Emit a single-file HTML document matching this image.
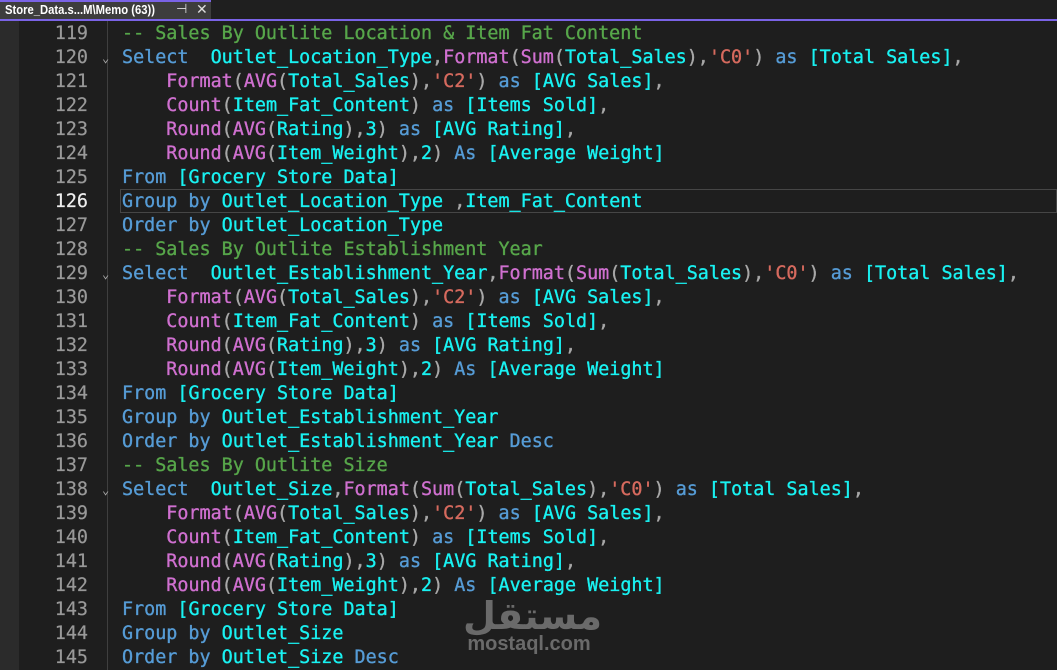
<!DOCTYPE html>
<html><head><meta charset="utf-8"><style>
*{margin:0;padding:0;box-sizing:border-box}
body{width:1057px;height:670px;background:#1e1e1e;overflow:hidden;position:relative;font-family:"DejaVu Sans Mono","Liberation Mono",monospace}
.tabbar{position:absolute;left:0;top:0;width:1057px;height:19px;background:#1f1f1f}
.tab{position:absolute;left:0;top:0;width:211px;height:19px;background:#3d3d3d;border-top:2px solid #7a63e6;white-space:nowrap}
.tab .t{position:absolute;left:5px;top:0;color:#fff;font:bold 12.5px "Liberation Sans",sans-serif;line-height:16px;transform:scaleX(0.9);transform-origin:0 0}
.tab .ic{position:absolute;left:176px;top:0;color:#ddd;font:13px "DejaVu Sans",sans-serif;line-height:16px}
.tab .x{position:absolute;left:196px;top:0;color:#ddd;font:14px "DejaVu Sans",sans-serif;line-height:16px}
.purple{position:absolute;left:0;top:19px;width:1057px;height:2px;background:#7a63e6}
.gutter{position:absolute;left:0;top:21px;width:19px;height:649px;background:#2b2b2b}
.foldline{position:absolute;left:107px;top:21px;width:1px;height:649px;background:#3f3f3f}
.ln{position:absolute;left:20px;width:68px;text-align:right;color:#999;font-size:18.4px;line-height:24px;-webkit-text-stroke:0.2px #999}
.ln .cur{color:#eee;-webkit-text-stroke:0.2px #eee}
.code{position:absolute;left:122px;font-size:18.4px;line-height:24px;white-space:pre;color:#dcdcdc;-webkit-text-stroke:0.35px currentColor}
.fold{position:absolute;left:102px;color:#aaa;font-size:12px;line-height:24px}
.curbox{position:absolute;left:120px;top:189px;width:937px;height:24px;border:1px solid #464646}
.k{color:#569cd6}.c{color:#19f2f2}.f{color:#d070d0}.s{color:#d66a5e}.g{color:#57a64a}.p{color:#a8a8a8}
.ar{position:absolute;left:463px;top:588px;width:132px;text-align:center;color:#6a6a6a;font:bold 38px "Noto Sans CJK SC","DejaVu Sans",sans-serif;line-height:50px}
.en{position:absolute;left:463px;top:632px;width:132px;text-align:center;color:#6a6a6a;font:bold 20px "Liberation Sans",sans-serif;line-height:24px}
</style></head><body>
<div class="tabbar"></div>
<div class="tab"><span class="t">Store_Data.s...M\Memo (63))</span><span class="ic">⊣</span><span class="x">✕</span></div>
<div class="purple"></div>
<div class="gutter"></div>
<div class="foldline"></div>
<div class="curbox"></div>
<div class="ln" style="top:22px">119<br>120<br>121<br>122<br>123<br>124<br>125<br><span class="cur">126</span><br>127<br>128<br>129<br>130<br>131<br>132<br>133<br>134<br>135<br>136<br>137<br>138<br>139<br>140<br>141<br>142<br>143<br>144<br>145</div>
<div class="fold" style="top:46px">⌄</div>
<div class="fold" style="top:262px">⌄</div>
<div class="fold" style="top:478px">⌄</div>
<div class="code" style="top:22px"><span class="g">-- Sales By Outlite Location &amp; Item Fat Content</span>
<span class="k">Select</span>  <span class="c">Outlet_Location_Type</span><span class="p">,</span><span class="f">Format</span><span class="p">(</span><span class="f">Sum</span><span class="p">(</span><span class="c">Total_Sales</span><span class="p">),</span><span class="s">'C0'</span><span class="p">)</span> <span class="k">as</span> <span class="c">[Total Sales]</span><span class="p">,</span>
    <span class="f">Format</span><span class="p">(</span><span class="f">AVG</span><span class="p">(</span><span class="c">Total_Sales</span><span class="p">),</span><span class="s">'C2'</span><span class="p">)</span> <span class="k">as</span> <span class="c">[AVG Sales]</span><span class="p">,</span>
    <span class="f">Count</span><span class="p">(</span><span class="c">Item_Fat_Content</span><span class="p">)</span> <span class="k">as</span> <span class="c">[Items Sold]</span><span class="p">,</span>
    <span class="f">Round</span><span class="p">(</span><span class="f">AVG</span><span class="p">(</span><span class="c">Rating</span><span class="p">),</span><span class="c">3</span><span class="p">)</span> <span class="k">as</span> <span class="c">[AVG Rating]</span><span class="p">,</span>
    <span class="f">Round</span><span class="p">(</span><span class="f">AVG</span><span class="p">(</span><span class="c">Item_Weight</span><span class="p">),</span><span class="c">2</span><span class="p">)</span> <span class="k">As</span> <span class="c">[Average Weight]</span>
<span class="k">From</span> <span class="c">[Grocery Store Data]</span>
<span class="k">Group by</span> <span class="c">Outlet_Location_Type</span> <span class="p">,</span><span class="c">Item_Fat_Content</span>
<span class="k">Order by</span> <span class="c">Outlet_Location_Type</span>
<span class="g">-- Sales By Outlite Establishment Year</span>
<span class="k">Select</span>  <span class="c">Outlet_Establishment_Year</span><span class="p">,</span><span class="f">Format</span><span class="p">(</span><span class="f">Sum</span><span class="p">(</span><span class="c">Total_Sales</span><span class="p">),</span><span class="s">'C0'</span><span class="p">)</span> <span class="k">as</span> <span class="c">[Total Sales]</span><span class="p">,</span>
    <span class="f">Format</span><span class="p">(</span><span class="f">AVG</span><span class="p">(</span><span class="c">Total_Sales</span><span class="p">),</span><span class="s">'C2'</span><span class="p">)</span> <span class="k">as</span> <span class="c">[AVG Sales]</span><span class="p">,</span>
    <span class="f">Count</span><span class="p">(</span><span class="c">Item_Fat_Content</span><span class="p">)</span> <span class="k">as</span> <span class="c">[Items Sold]</span><span class="p">,</span>
    <span class="f">Round</span><span class="p">(</span><span class="f">AVG</span><span class="p">(</span><span class="c">Rating</span><span class="p">),</span><span class="c">3</span><span class="p">)</span> <span class="k">as</span> <span class="c">[AVG Rating]</span><span class="p">,</span>
    <span class="f">Round</span><span class="p">(</span><span class="f">AVG</span><span class="p">(</span><span class="c">Item_Weight</span><span class="p">),</span><span class="c">2</span><span class="p">)</span> <span class="k">As</span> <span class="c">[Average Weight]</span>
<span class="k">From</span> <span class="c">[Grocery Store Data]</span>
<span class="k">Group by</span> <span class="c">Outlet_Establishment_Year</span>
<span class="k">Order by</span> <span class="c">Outlet_Establishment_Year</span> <span class="k">Desc</span>
<span class="g">-- Sales By Outlite Size</span>
<span class="k">Select</span>  <span class="c">Outlet_Size</span><span class="p">,</span><span class="f">Format</span><span class="p">(</span><span class="f">Sum</span><span class="p">(</span><span class="c">Total_Sales</span><span class="p">),</span><span class="s">'C0'</span><span class="p">)</span> <span class="k">as</span> <span class="c">[Total Sales]</span><span class="p">,</span>
    <span class="f">Format</span><span class="p">(</span><span class="f">AVG</span><span class="p">(</span><span class="c">Total_Sales</span><span class="p">),</span><span class="s">'C2'</span><span class="p">)</span> <span class="k">as</span> <span class="c">[AVG Sales]</span><span class="p">,</span>
    <span class="f">Count</span><span class="p">(</span><span class="c">Item_Fat_Content</span><span class="p">)</span> <span class="k">as</span> <span class="c">[Items Sold]</span><span class="p">,</span>
    <span class="f">Round</span><span class="p">(</span><span class="f">AVG</span><span class="p">(</span><span class="c">Rating</span><span class="p">),</span><span class="c">3</span><span class="p">)</span> <span class="k">as</span> <span class="c">[AVG Rating]</span><span class="p">,</span>
    <span class="f">Round</span><span class="p">(</span><span class="f">AVG</span><span class="p">(</span><span class="c">Item_Weight</span><span class="p">),</span><span class="c">2</span><span class="p">)</span> <span class="k">As</span> <span class="c">[Average Weight]</span>
<span class="k">From</span> <span class="c">[Grocery Store Data]</span>
<span class="k">Group by</span> <span class="c">Outlet_Size</span>
<span class="k">Order by</span> <span class="c">Outlet_Size</span> <span class="k">Desc</span></div>
<div class="ar">مستقل</div>
<div class="en">mostaql.com</div>
</body></html>
